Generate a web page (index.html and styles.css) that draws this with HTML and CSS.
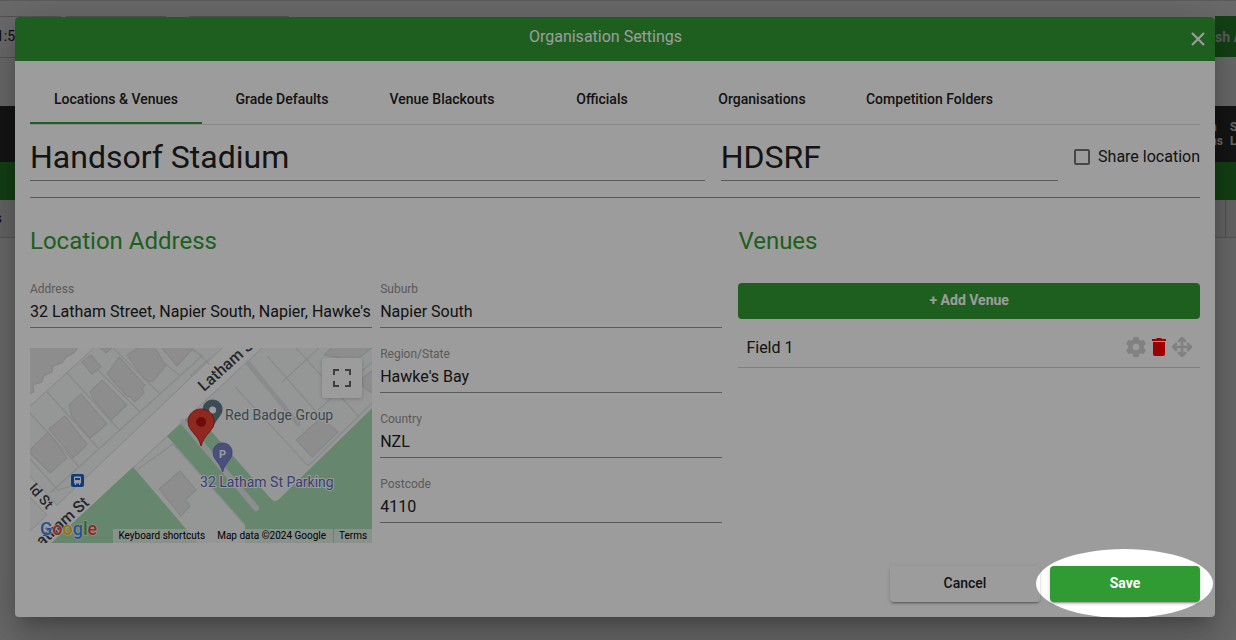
FILE: index.html
```html
<!DOCTYPE html>
<html lang="en">
<head>
    <meta charset="UTF-8">
    <title>Organisation Settings</title>
    <link rel="stylesheet" href="styles.css">
</head>
<body>
    <div class="page">
        <div class="toolbar">
            <div class="filter filter-time">1:5</div>
            <div class="filter filter-first"></div>
            <div class="filter filter-second"></div>
            <button class="publish">sh A</button>
        </div>
        <div class="grid-head">
            <div class="grid-col">n<br>ns</div>
            <div class="grid-last">S<br>L</div>
        </div>
        <div class="grid-group"></div>
        <div class="grid-row">
            <a class="grid-link" href="#">s</a>
            <span class="grid-end"></span>
        </div>
    </div>

    <div class="backdrop">
        <div class="dialog">
            <div class="dialog-header">
                <div class="dialog-title">Organisation Settings</div>
                <button class="close" aria-label="Close">
                    <svg width="14" height="14" viewBox="0 0 14 14"><path d="M1 1L13 13M13 1L1 13" stroke="#fff" stroke-width="2.2"/></svg>
                </button>
            </div>

            <div class="dialog-body">
                <div class="tabs">
                    <button class="tab active">Locations &amp; Venues</button>
                    <button class="tab">Grade Defaults</button>
                    <button class="tab">Venue Blackouts</button>
                    <button class="tab">Officials</button>
                    <button class="tab">Organisations</button>
                    <button class="tab">Competition Folders</button>
                </div>

                <div class="name-row">
                    <input class="name-input name" type="text" value="Handsorf Stadium" aria-label="Location name">
                    <input class="name-input code" type="text" value="HDSRF" aria-label="Location code">
                    <label class="share"><input type="checkbox">Share location</label>
                </div>
                <hr>

                <div class="columns">
                    <div class="location">
                        <h2>Location Address</h2>
                        <div class="address">
                            <div class="address-col">
                                <div class="field">
                                    <label for="address">Address</label>
                                    <input type="text" id="address" value="32 Latham Street, Napier South, Napier, Hawke's">
                                </div>
                                <div class="map">
                                    <svg class="map-tiles" viewBox="0 0 342 195" preserveAspectRatio="xMidYMid slice">
                                        <rect width="342" height="195" fill="#fefefe"/>
                                        <!-- blocks -->
                                        <g fill="#f3f6f5" stroke="#dfe1e1" stroke-width="1">
                                            <path d="M-1 59L65 -1H193L27 157L-1 127Z"/>
                                            <path d="M-1 148L17 167L-1 184Z"/>
                                            <path d="M21 196L233 -1H343V196Z"/>
                                        </g>
                                        <!-- parks -->
                                        <g fill="#a8dbb4">
                                            <path d="M21 195L103 119L168 195Z"/>
                                            <path d="M137 88L164 64L241 151Q245 155 249 151L342 60V195H215V177Z"/>
                                        </g>
                                        <path d="M153 74L226 160" stroke="#e4e7e8" stroke-width="6" stroke-linecap="round"/>
                                        <path d="M218 15L268 76" stroke="#e0e3e7" stroke-width="5" stroke-linecap="round"/>
                                        <!-- lot lines -->
                                        <g fill="none" stroke="#dfe1e1" stroke-width="1.2">
                                            <path d="M20 145L173 7M17 44L69 101M0 65L49 119M37 25L90 83M56 10L110 64M75 -8L129 45M105 -8L149 27M145 -8L171 7M0 111L28 142L41 138"/>
                                            <path d="M205 39L278 118L342 55M237 8L288 66M265 -1L329 69M252 34L292 -3M288 62L342 14M107 122L143 96L215 177M160 -2L180 17M160 28L180 10"/>
                                        </g>
                                        <!-- buildings -->
                                        <g fill="#e6e6e6" stroke="#d9d9d9" stroke-width="1">
                                            <path d="M-1 -1H48L44 5L36 9L32 15L23 18L22 24L14 28L12 34L3 37L4 44L-1 46Z"/>
                                            <path d="M52 14L61 7L71 19L62 26Z"/>
                                            <path d="M70 0L76 5L82 0Z"/>
                                            <path d="M97 7L120 -8L136 18L122 34L114 31Z"/>
                                            <path d="M77 26L89 9L115 37L112 41L114 45L105 54L100 49L96 47Z"/>
                                            <path d="M60 44L72 32L97 57L81 72L64 52Z"/>
                                            <path d="M39 57L51 46L77 76L60 90L42 69Z"/>
                                            <path d="M19 81L35 68L57 96L55 99L43 110Z"/>
                                            <path d="M0 102L18 84L37 110L20 125L0 105Z"/>
                                            <path d="M130 -2L147 18L164 -1Z"/>
                                            <path d="M129 141L150 123L166 142L155 152L160 158L151 168Z"/>
                                            <path d="M266 92L291 70L308 84L282 109Z"/>
                                            <path d="M294 7L302 -1H343L325 13Z"/>
                                            <path d="M332 30L343 22V46L332 38Z"/>
                                        </g>
                                        <!-- street names -->
                                        <g class="street">
                                            <text transform="translate(174 44) rotate(-42)">Latham St</text>
                                            <text transform="translate(12 199) rotate(-42)">atham St</text>
                                            <text class="street-small" transform="translate(-2 141) rotate(48)">ld St</text>
                                        </g>
                                        <!-- bus stop -->
                                        <rect x="41" y="126" width="13" height="13" rx="2" fill="#1a62cf"/>
                                        <path d="M44 129.500Q44 128.500 45 128.500H50Q51 128.500 51 129.500V135.500H50V137H49V135.500H46V137H45V135.500H44Z" fill="#fff"/>
                                        <path d="M45 130H50V132H45Z" fill="#1a62cf"/>
                                        <!-- places -->
                                        <path d="M182.500 52C177 52 173 56 173 61.500C173 68 180 71 182.500 80C185 71 192 68 192 61.500C192 56 188 52 182.500 52Z" fill="#617d8b" stroke="#4e6672" stroke-width=".7"/>
                                        <circle cx="182.500" cy="62" r="3.500" fill="#fff"/>
                                        <path d="M192.500 95C187 95 183 99 183 104.500C183 112 190 114 192.500 124C195 114 202 112 202 104.500C202 99 198 95 192.500 95Z" fill="#7883cb" stroke="#5560ab" stroke-width=".7"/>
                                        <text class="parking" x="189" y="110">P</text>
                                        <path d="M171 61C163.500 61 158 66.500 158 74C158 83 168 86 171 98C174 86 184 83 184 74C184 66.500 178.500 61 171 61Z" fill="#ea4335" stroke="#b31412" stroke-width=".8"/>
                                        <circle cx="171" cy="74" r="5" fill="#b31412"/>
                                        <text class="place" x="195" y="72">Red Badge Group</text>
                                        <text class="place place-parking" x="170" y="139">32 Latham St Parking</text>
                                        <!-- logo -->
                                        <text class="logo" x="10" y="187"><tspan fill="#4285f4">G</tspan><tspan fill="#ea4335">o</tspan><tspan fill="#fbbc05">o</tspan><tspan fill="#4285f4">g</tspan><tspan fill="#34a853">l</tspan><tspan fill="#ea4335">e</tspan></text>
                                    </svg>
                                    <button class="fullscreen" aria-label="Toggle fullscreen view">
                                        <svg width="18" height="18" viewBox="0 0 18 18"><path d="M1 6V1H6M12 1H17V6M17 12V17H12M6 17H1V12" fill="none" stroke="#666" stroke-width="2"/></svg>
                                    </button>
                                    <div class="map-footer">
                                        <button>Keyboard shortcuts</button>
                                        <span>Map data ©2024 Google</span>
                                        <a href="#">Terms</a>
                                    </div>
                                </div>
                            </div>
                            <div class="address-col">
                                <div class="field">
                                    <label for="suburb">Suburb</label>
                                    <input type="text" id="suburb" value="Napier South">
                                </div>
                                <div class="field">
                                    <label for="region">Region/State</label>
                                    <input type="text" id="region" value="Hawke's Bay">
                                </div>
                                <div class="field">
                                    <label for="country">Country</label>
                                    <input type="text" id="country" value="NZL">
                                </div>
                                <div class="field">
                                    <label for="postcode">Postcode</label>
                                    <input type="text" id="postcode" value="4110">
                                </div>
                            </div>
                        </div>
                    </div>

                    <div class="venues">
                        <h2>Venues</h2>
                        <button class="btn btn-green add-venue">+ Add Venue</button>
                        <div class="venue">
                            <span>Field 1</span>
                            <div class="venue-actions">
                                <button aria-label="Edit venue">
                                    <svg width="20" height="20" viewBox="0 0 20 20"><path d="M7.500 0H12.500L13 2.800L14.800 3.800L17.500 2.800L20 7L17.800 8.900V11.100L20 13L17.500 17.200L14.800 16.200L13 17.200L12.500 20H7.500L7 17.200L5.200 16.200L2.500 17.200L0 13L2.200 11.100V8.900L0 7L2.500 2.800L5.200 3.800L7 2.800ZM10 6.700A3.300 3.300 0 1 0 10 13.300A3.300 3.300 0 1 0 10 6.700Z" fill="#d3d3d3"/></svg>
                                </button>
                                <button aria-label="Delete venue">
                                    <svg width="14" height="18" viewBox="0 0 14 18"><path d="M1 4H13V16Q13 18 11 18H3Q1 18 1 16ZM0 1H4L5 0H9L10 1H14V3H0Z" fill="#f00"/></svg>
                                </button>
                                <button aria-label="Move venue">
                                    <svg width="20" height="20" viewBox="0 0 20 20"><path d="M10 1V19M1 10H19M7 4L10 1L13 4M7 16L10 19L13 16M4 7L1 10L4 13M16 7L19 10L16 13" fill="none" stroke="#d3d3d3" stroke-width="2.600" stroke-linejoin="round" stroke-linecap="round"/></svg>
                                </button>
                            </div>
                        </div>
                    </div>
                </div>

                <div class="actions">
                    <button class="btn btn-plain">Cancel</button>
                    <div class="save-wrap">
                        <button class="btn btn-green btn-raised">Save</button>
                        <span class="spotlight"></span>
                    </div>
                </div>
            </div>
        </div>
    </div>
</body>
</html>
```

FILE: styles.css
```css
* {
    box-sizing: border-box;
}
body {
    margin: 0;
    font-family: Roboto, sans-serif;
    font-size: 16px;
    color: #212121;
    background-color: #fff;
    overflow: hidden;
}
button {
    font-family: inherit;
    border: none;
    background: none;
    padding: 0;
    cursor: pointer;
}
svg {
    display: block;
}

/* page behind the dialog */
.page {
    border-top: 1px solid #ddd;
    padding-top: 15px;
}
.toolbar {
    display: flex;
    height: 42px;
}
.filter {
    border-top: 1px solid #ccc;
    border-bottom: 1px solid #ccc;
    line-height: 38px;
    font-size: 14px;
}
.filter-time {
    width: 61px;
    margin-right: 5px;
    text-indent: -4px;
}
.filter-first {
    width: 100px;
    margin-right: 23px;
}
.filter-second {
    width: 100px;
}
.publish {
    margin-left: auto;
    width: 21px;
    height: 41px;
    background-color: #319b33;
    color: #ddd;
    font-size: 14px;
    font-weight: bold;
    white-space: nowrap;
    text-align: left;
}
.grid-head {
    display: flex;
    justify-content: flex-end;
    margin-top: 48px;
    height: 56px;
    padding-top: 14px;
    background-color: #333;
    color: #fff;
    font-size: 12px;
    line-height: 14px;
    font-weight: bold;
}
.grid-col {
    width: 15px;
    margin-right: 5px;
}
.grid-last {
    width: 6px;
}
.grid-group {
    height: 38px;
    background-color: #319b33;
}
.grid-row {
    display: flex;
    justify-content: space-between;
    height: 38px;
    line-height: 36px;
    border-bottom: 1px solid #ccc;
    background-color: #f5f5f5;
}
.grid-link {
    width: 2px;
    font-size: 14px;
    color: #1a237e;
    text-decoration: none;
    direction: rtl;
}
.grid-end {
    width: 11px;
    border-left: 1px solid #ccc;
}

/* dialog */
.backdrop {
    position: absolute;
    inset: 0;
    padding: 17px 21px 0 15px;
    background-color: rgba(0,0,0,0.32);
}
.dialog {
    background-color: white;
    border-radius: 4px;
    box-shadow: 0 11px 15px -7px rgba(0,0,0,0.2), 0 24px 38px 3px rgba(0,0,0,0.14), 0 9px 46px 8px rgba(0,0,0,0.12);
}
.dialog-header {
    display: flex;
    height: 44px;
    padding: 0 10px 0 5px;
    border-radius: 4px 4px 0 0;
    background-color: #319b33;
    color: #fff;
}
.dialog-title {
    flex: 1;
    line-height: 40px;
    text-align: center;
}
.close {
    width: 14px;
}
.dialog-body {
    padding: 15px;
}
.tabs {
    display: flex;
    border-bottom: 1px solid #e0e0e0;
}
.tab {
    min-width: 160px;
    height: 48px;
    padding: 0 24px;
    border-bottom: 2px solid transparent;
    color: #212121;
    font-size: 14px;
    font-weight: 500;
}
.tab.active {
    border-bottom-color: #319b33;
}
.name-row {
    display: flex;
    gap: 16px;
}
.name-input {
    min-width: 0;
    height: 56px;
    padding: 8px 0 0;
    border: none;
    border-bottom: 1px solid #949494;
    background: none;
    color: #212121;
    font-family: inherit;
    font-size: 32px;
}
.name {
    flex: 2;
}
.code {
    flex: 1;
}
.share {
    display: flex;
    align-items: center;
    gap: 8px;
    padding-top: 7px;
}
.share input {
    appearance: none;
    width: 16px;
    height: 16px;
    margin: 0;
    border: 2px solid #757575;
    border-radius: 2px;
}
hr {
    margin: 16px 0 0;
    border: none;
    border-top: 1px solid #949494;
}
.columns {
    display: grid;
    grid-template-columns: 3fr 2fr;
    gap: 16px;
}
h2 {
    margin: 27px 0 26px;
    color: #319b33;
    font-size: 24px;
    line-height: 32px;
    font-weight: 400;
}
.address {
    display: grid;
    grid-template-columns: 1fr 1fr;
    gap: 8px;
}
.address-col {
    min-width: 0;
}
.field {
    display: flex;
    flex-direction: column;
    justify-content: space-between;
    height: 45px;
    margin-bottom: 20px;
}
.field label {
    color: #949494;
    font-size: 12px;
    line-height: 12px;
}
.field input {
    width: 100%;
    height: 32px;
    padding: 0;
    border: none;
    border-bottom: 1px solid #949494;
    background: none;
    color: #212121;
    font-family: inherit;
    font-size: 16px;
}

/* map */
.map {
    position: relative;
    overflow: hidden;
}
.map-tiles {
    width: 100%;
    height: 195px;
}
.street {
    fill: #3c4043;
    font-size: 16px;
    font-weight: 500;
}
.street-small {
    font-size: 14px;
}
.parking {
    fill: #fff;
    font-size: 11px;
    font-weight: bold;
}
.place {
    fill: #5b7684;
    stroke: #fff;
    stroke-width: 2px;
    paint-order: stroke;
    font-size: 14px;
}
.place-parking {
    fill: #5f69bd;
}
.logo {
    font-size: 18px;
    font-weight: 500;
    stroke: #fff;
    stroke-width: 1px;
    paint-order: stroke;
}
.fullscreen {
    position: absolute;
    top: 10px;
    right: 10px;
    width: 40px;
    height: 40px;
    border-radius: 2px;
    background-color: #fff;
    box-shadow: 0 1px 4px -1px rgba(0,0,0,0.3);
}
.fullscreen svg {
    margin: auto;
}
.map-footer {
    position: absolute;
    right: 0;
    bottom: 0;
    display: flex;
    height: 14px;
    line-height: 14px;
}
.map-footer > * {
    padding: 0 5px;
    background-color: rgba(245,245,245,0.7);
    color: #000;
    font-size: 10px;
    line-height: 14px;
    text-decoration: none;
}
.map-footer span {
    padding: 0 7px;
}
.map-footer a {
    border-left: 1px solid #a8dbb4;
}

/* venues */
.btn {
    height: 36px;
    padding-bottom: 2px;
    border-radius: 4px;
    color: #212121;
    font-size: 14px;
    font-weight: 500;
}
.btn-green {
    background-color: #319b33;
    color: #fff;
    font-weight: bold;
}
.add-venue {
    width: 100%;
}
.venue {
    display: flex;
    justify-content: space-between;
    align-items: center;
    height: 49px;
    padding: 8px 8px 0;
    border-bottom: 1px solid #d0d0d0;
}
.venue-actions {
    display: flex;
    align-items: center;
    gap: 6px;
}

/* actions */
.actions {
    display: flex;
    justify-content: flex-end;
    gap: 10px;
    margin-top: 23px;
}
.actions .btn {
    width: 150px;
}
.btn-plain, .btn-raised {
    box-shadow: 0 3px 1px -2px rgba(0,0,0,0.2), 0 2px 2px 0 rgba(0,0,0,0.14), 0 1px 5px 0 rgba(0,0,0,0.12);
}
.save-wrap {
    position: relative;
}
/* dims everything except an ellipse round the save button */
.spotlight {
    position: absolute;
    inset: -17px -13px -16px -14px;
    border-radius: 50%;
    box-shadow: 0 0 0 3000px rgba(0,0,0,0.39);
    pointer-events: none;
}
```
